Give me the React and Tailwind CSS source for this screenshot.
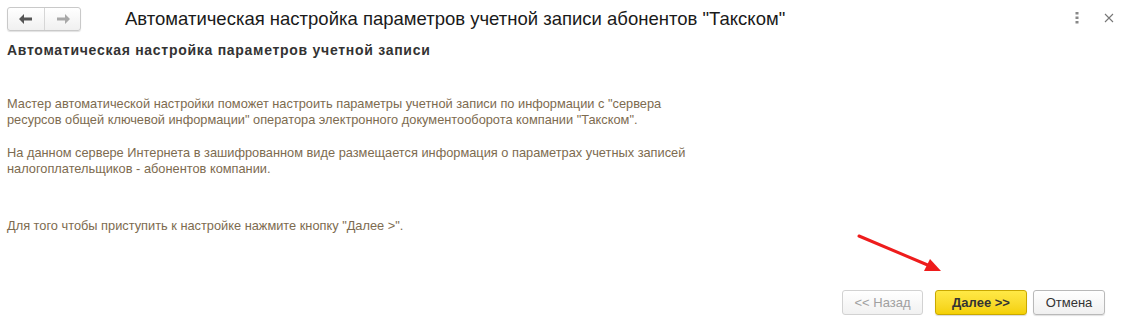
import React from 'react';

const font = { fontFamily: '"Liberation Sans", Arial, sans-serif' };

function NavButtons() {
  return (
    <div className="flex h-[24px] w-[74px] rounded-[3px] border border-[#c9c9c9] bg-gradient-to-b from-white to-[#f0f0f0] shadow-[0_1px_1px_rgba(0,0,0,0.12)]">
      <div className="flex w-[37px] items-center justify-center border-r border-[#d6d6d6]">
        <svg width="14" height="10" viewBox="0 0 14 10">
          <path d="M0 5 L5 0 L5 3.5 L13 3.5 L13 6.5 L5 6.5 L5 10 Z" fill="#555" />
        </svg>
      </div>
      <div className="flex flex-1 items-center justify-center">
        <svg width="14" height="10" viewBox="0 0 14 10">
          <path d="M14 5 L9 0 L9 3.5 L1 3.5 L1 6.5 L9 6.5 L9 10 Z" fill="#a8a8a8" />
        </svg>
      </div>
    </div>
  );
}

export default function App() {
  return (
    <div className="relative flex h-[326px] w-[1130px] flex-col bg-white" style={font}>
      {/* Header */}
      <div className="flex h-[38px] items-start px-[7px] pt-[7px]">
        <NavButtons />
        <div className="ml-[44px] text-[18.5px] leading-[24px] text-[#1a1a1a]">
          Автоматическая настройка параметров учетной записи абонентов "Такском"
        </div>
        <div className="ml-auto flex items-center gap-[25px] pt-[5px] pr-[9px]">
          <svg width="4" height="12" viewBox="0 0 4 12">
            <rect x="0.5" y="0" width="3" height="2.5" fill="#888" />
            <rect x="0.5" y="4.5" width="3" height="2.5" fill="#888" />
            <rect x="0.5" y="9" width="3" height="2.5" fill="#888" />
          </svg>
          <svg width="10" height="10" viewBox="0 0 10 10">
            <path d="M1 1 L9 9 M9 1 L1 9" stroke="#777" strokeWidth="1.1" />
          </svg>
        </div>
      </div>

      {/* Content */}
      <div className="flex flex-1 flex-col px-[7px]">
        <div className="mt-[4px] text-[14px] font-bold leading-[16px] tracking-[0.72px] text-[#333]">
          Автоматическая настройка параметров учетной записи
        </div>
        <div className="mt-[38px] text-[12.8px] leading-[16px] text-[#7d6b4f]">
          <p>
            Мастер автоматической настройки поможет настроить параметры учетной записи по информации с "сервера
            <br />
            ресурсов общей ключевой информации" оператора электронного документооборота компании "Такском".
          </p>
          <p className="mt-[17px]">
            На данном сервере Интернета в зашифрованном виде размещается информация о параметрах учетных записей
            <br />
            налогоплательщиков - абонентов компании.
          </p>
          <p className="mt-[41px]">Для того чтобы приступить к настройке нажмите кнопку "Далее &gt;".</p>
        </div>

        {/* Footer buttons */}
        <div className="mt-auto flex justify-end gap-[12px] pb-[11px] pr-[18px]">
          <button className="h-[25px] w-[81px] rounded-[3px] border border-[#d2d2d2] bg-gradient-to-b from-white to-[#f1f1f1] text-[13px] text-[#a0a0a0]">
            &lt;&lt; Назад
          </button>
          <div className="flex gap-[6px]">
            <button className="h-[25px] w-[92px] rounded-[3px] border border-[#c9a800] bg-gradient-to-b from-[#ffe945] to-[#f4d000] text-[13px] font-bold text-[#333] shadow-[0_1px_1px_rgba(0,0,0,0.15)]">
              Далее &gt;&gt;
            </button>
            <button className="h-[25px] w-[72px] rounded-[3px] border border-[#b9b9b9] bg-gradient-to-b from-white to-[#f0f0f0] text-[13px] text-[#333] shadow-[0_1px_1px_rgba(0,0,0,0.12)]">
              Отмена
            </button>
          </div>
        </div>
      </div>

      {/* Red annotation arrow */}
      <svg className="pointer-events-none absolute left-0 top-0" width="1130" height="326">
        <line x1="859" y1="236" x2="930" y2="266" stroke="#ee1c1c" strokeWidth="3" strokeLinecap="round" />
        <polygon points="941,271 924,271 930,259" fill="#ee1c1c" />
      </svg>
    </div>
  );
}
